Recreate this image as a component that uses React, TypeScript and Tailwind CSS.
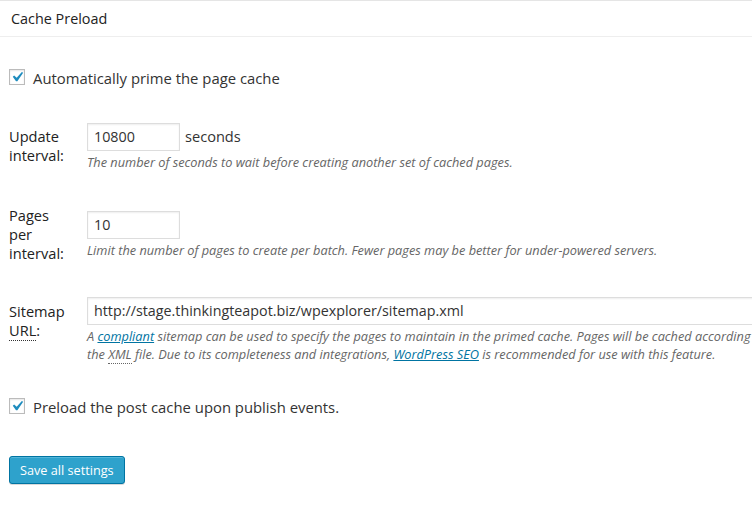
import React from "react";

function Check() {
  return (
    <span className="relative inline-block w-[16px] h-[16px] border border-[#bbb] bg-white shadow-[inset_0_1px_2px_rgba(0,0,0,0.1)] shrink-0">
      <svg
        viewBox="0 0 20 20"
        className="absolute left-[-3px] top-[-3px] w-[20px] h-[20px]"
      >
        <path
          d="M14.83 4.89l1.34.94-5.81 8.38H9.02L5.78 9.67l1.34-1.25 2.57 2.4z"
          fill="#1e8cbe"
        />
      </svg>
    </span>
  );
}

export default function App() {
  const input =
    "h-[28px] border border-[#ddd] bg-white shadow-[inset_0_1px_2px_rgba(0,0,0,0.07)] pl-[6px] text-[14.3px] text-[#333] leading-[26px]";
  const desc = "pt-[2px] text-[12.75px] italic text-[#666] leading-[18px] whitespace-nowrap";
  return (
    <div
      className="w-[752px] h-[514px] bg-white overflow-hidden text-[#333]"
      style={{ fontFamily: '"Open Sans", sans-serif' }}
    >
      <div className="h-[37px] border-t border-b border-t-[#e5e5e5] border-b-[#eee] flex items-center pl-[11px] text-[14.4px] text-[#222]">
        Cache Preload
      </div>

      <div className="mt-[31px] flex items-start pl-[9px] h-[20px]">
        <span className="mt-[1px] flex">
          <Check />
        </span>
        <span className="ml-[8px] text-[14.85px] leading-[20px]">
          Automatically prime the page cache
        </span>
      </div>

      <div className="mt-[35px] flex items-start">
        <div className="w-[87px] shrink-0 pl-[9px] pt-[4px] text-[14.6px] leading-[19px] text-[#222]">
          Update
          <br />
          interval:
        </div>
        <div className="flex flex-col">
          <div className="flex items-center">
            <div className={`${input} w-[93px]`}>10800</div>
            <span className="ml-[5px] text-[14.6px]">seconds</span>
          </div>
          <div className={desc}>
            The number of seconds to wait before creating another set of cached pages.
          </div>
        </div>
      </div>

      <div className="mt-[34.5px] flex items-start">
        <div className="w-[87px] shrink-0 pl-[9px] text-[14.6px] leading-[19px] text-[#222]">
          Pages
          <br />
          per
          <br />
          interval:
        </div>
        <div className="flex flex-col pt-[5px]">
          <div className={`${input} w-[93px]`}>10</div>
          <div className={desc}>
            Limit the number of pages to create per batch. Fewer pages may be better for under-powered servers.
          </div>
        </div>
      </div>

      <div className="mt-[34px] flex items-start">
        <div className="w-[87px] shrink-0 pl-[9px] pt-[5px] text-[14.6px] leading-[19px] text-[#222]">
          Sitemap
          <br />
          <abbr className="no-underline border-b border-dotted border-[#333]">URL</abbr>:
        </div>
        <div className="flex flex-col">
          <div className={`${input} w-[700px] whitespace-nowrap`}>
            http://stage.thinkingteapot.biz/wpexplorer/sitemap.xml
          </div>
          <div className={desc}>
            A{" "}
            <span className="text-[#0074a2] underline">compliant</span> sitemap can be used to
            specify the pages to maintain in the primed cache. Pages will be cached according to
            <br />
            the{" "}
            <abbr className="no-underline border-b border-dotted border-[#666]">XML</abbr> file.
            Due to its completeness and integrations,{" "}
            <span className="text-[#0074a2] underline">WordPress SEO</span> is recommended for
            use with this feature.
          </div>
        </div>
      </div>

      <div className="mt-[34px] flex items-start pl-[9px] h-[20px]">
        <span className="mt-[1px] flex">
          <Check />
        </span>
        <span className="ml-[8px] text-[14.85px] leading-[20px]">
          Preload the post cache upon publish events.
        </span>
      </div>

      <div className="mt-[39px] pl-[9px]">
        <button className="h-[28px] px-[10px] rounded-[3px] bg-[#2ea2cc] border border-[#0074a2] text-white text-[12.7px] leading-[26px] shadow-[inset_0_1px_0_rgba(120,200,230,0.5),0_1px_0_rgba(0,0,0,0.15)]">
          Save all settings
        </button>
      </div>
    </div>
  );
}
